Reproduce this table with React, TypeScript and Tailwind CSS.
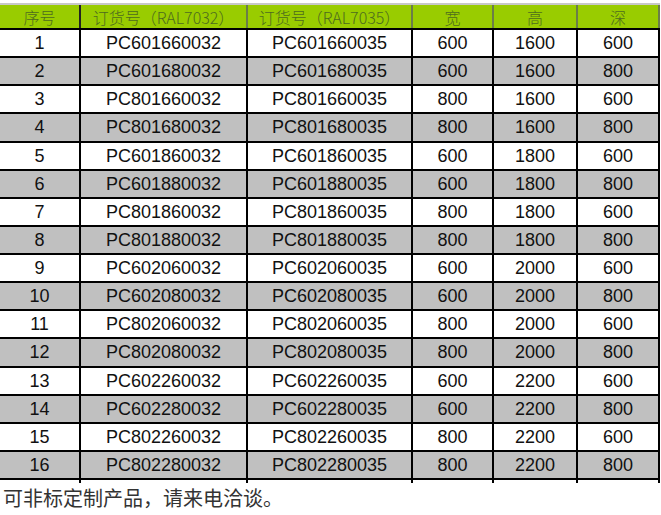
import React from 'react';

const sizes: [number, number, number][] = [];
for (const h of [1600, 1800, 2000, 2200]) {
  for (const w of [600, 800]) {
    for (const d of [600, 800]) {
      sizes.push([w, h, d]);
    }
  }
}

// order in the sheet: width cycles slower than depth within each height
const rows = sizes.map(([w, h, d], i) => {
  const base = `PC${w / 100}0${h / 100}${d / 100}00`;
  return { no: i + 1, a: `${base}32`, b: `${base}35`, w, h, d };
});

const cols = 'grid grid-cols-[81px_167px_165px_81px_84px_82px]';

export default function App() {
  return (
    <div className="w-[661px] h-[515px] bg-white overflow-hidden">
      <div className="w-[660px] mt-[3px] border-t-2 border-[#c8c8c8]">
        <div
          className={`${cols} h-[25px] bg-[#99cc00] border-b-2 border-black text-[16px] text-[#4d6b1f]`}
          style={{ fontFamily: '"Noto Sans CJK SC", sans-serif' }}
        >
          {['序号', '订货号（RAL7032）', '订货号（RAL7035）', '宽', '高', '深'].map((t, i) => (
            <div
              key={t}
              className={`flex items-center justify-center leading-none font-light ${
                i === 0 ? 'border-r-2 border-[#222]' : 'border-r-2 border-[#6b7d4a]'
              }`}
            >
              {t}
            </div>
          ))}
        </div>

        {rows.map((r) => (
          <div
            key={r.no}
            className={`${cols} h-[28.125px] border-b-2 border-black text-[18px] text-[#111] ${
              r.no % 2 === 0 ? 'bg-[#c0c0c0]' : 'bg-white'
            }`}
            style={{ fontFamily: '"Liberation Sans", Arial, sans-serif' }}
          >
            {[r.no, r.a, r.b, r.w, r.h, r.d].map((v, i) => (
              <div key={i} className="flex items-center justify-center border-r-2 border-black leading-none">
                {v}
              </div>
            ))}
          </div>
        ))}

        <div className={`${cols} h-[3px]`}>
          {[0, 1, 2, 3, 4, 5].map((i) => (
            <div key={i} className="border-r-2 border-black" />
          ))}
        </div>
      </div>

      <p
        className="mt-[2px] pl-[3px] text-[20px] leading-[26px] text-[#333]"
        style={{ fontFamily: '"Noto Sans CJK SC", sans-serif' }}
      >
        可非标定制产品，请来电洽谈。
      </p>
    </div>
  );
}
